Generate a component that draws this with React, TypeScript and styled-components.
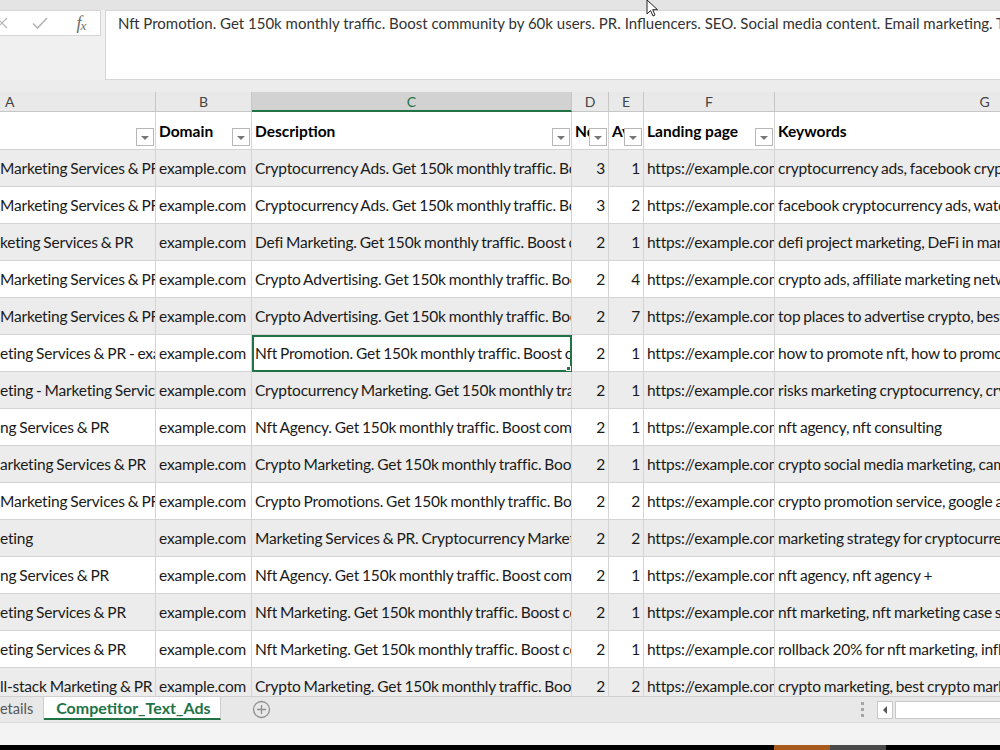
import React from 'react';
import styled, { createGlobalStyle } from 'styled-components';

const GlobalStyle = createGlobalStyle`
  html, body {
    margin: 0;
    padding: 0;
    overflow: hidden;
    background: #f3f3f3;
  }
  * {
    box-sizing: border-box;
  }
`;

const COLS = '156px 96px 320px 37px 35px 131px 420px';
const GRID = '#d4d4d4';
const GREEN = '#217346';
const FONT = `Lato, "Open Sans", sans-serif`;

const Frame = styled.div`
  width: 1000px;
  height: 750px;
  display: flex;
  flex-direction: column;
  overflow: hidden;
  position: relative;
  font-family: ${FONT};
  background: #f0f0f0;
`;

const TopStrip = styled.div`
  height: 10px;
  background: #e4e4e4;
  flex-shrink: 0;
`;

const FormulaRow = styled.div`
  height: 70px;
  display: flex;
  gap: 4px;
  flex-shrink: 0;
`;

const EditButtons = styled.div`
  width: 101px;
  height: 26px;
  background: #fff;
  border: 1px solid #d6d6d6;
  border-left: none;
  display: flex;
  align-items: center;
  gap: 22px;
`;

const IconSlot = styled.span<{ $w?: number }>`
  width: ${p => p.$w || 16}px;
  height: 20px;
  display: flex;
  align-items: center;
  justify-content: center;
`;

const Fx = styled.span`
  font-family: "Liberation Serif", serif;
  font-style: italic;
  font-size: 18px;
  color: #6d6d6d;
  letter-spacing: -1px;

  sub {
    font-size: 13px;
    vertical-align: -1px;
  }
`;

const FormulaInput = styled.div`
  flex: 1;
  background: #fff;
  border: 1px solid #d6d6d6;
  border-right: none;
  padding: 0 0 0 12px;
  font-size: 15px;
  color: #333;
  white-space: nowrap;
  overflow: hidden;
  line-height: 25px;
`;

const Gap = styled.div`
  height: 12px;
  background: #ececec;
  flex-shrink: 0;
`;

const Sheet = styled.div`
  height: 604px;
  overflow: hidden;
  background: #fff;
  flex-shrink: 0;
`;

const Row = styled.div<{ $h: number; $bg?: string }>`
  display: grid;
  grid-template-columns: ${COLS};
  height: ${p => p.$h}px;
  background: ${p => p.$bg || '#fff'};
`;

const ColHead = styled.div<{ $active?: boolean; $left?: boolean }>`
  display: flex;
  align-items: center;
  justify-content: ${p => (p.$left ? 'flex-start' : 'center')};
  padding-left: ${p => (p.$left ? '5px' : '0')};
  background: ${p => (p.$active ? '#d2d2d2' : '#e9e9e9')};
  color: ${p => (p.$active ? GREEN : '#444')};
  border-right: 1px solid #c6c6c6;
  border-bottom: ${p => (p.$active ? `2px solid ${GREEN}` : '1px solid #c6c6c6')};
  font-size: 14px;
`;

const HeadCell = styled.div`
  position: relative;
  display: flex;
  align-items: center;
  padding: 0 3px;
  border-right: 1px solid ${GRID};
  border-bottom: 1px solid ${GRID};
  font-weight: 700;
  font-size: 15.5px;
  color: #000;
  white-space: nowrap;
  overflow: hidden;
`;

const FilterBtn = styled.span`
  position: absolute;
  right: 1px;
  bottom: 3px;
  width: 18px;
  height: 18px;
  background: #fff;
  border: 1px solid #b7b7b7;
  display: flex;
  align-items: center;
  justify-content: center;

  &::after {
    content: '';
    width: 0;
    height: 0;
    border-left: 4px solid transparent;
    border-right: 4px solid transparent;
    border-top: 4px solid #777;
    margin-top: 2px;
  }
`;

const Cell = styled.div<{ $num?: boolean; $first?: boolean; $selected?: boolean }>`
  position: relative;
  display: flex;
  align-items: center;
  justify-content: ${p => (p.$num ? 'flex-end' : 'flex-start')};
  padding: ${p => (p.$num ? '0 3px 0 0' : p.$first ? '0' : '0 3px')};
  border-right: 1px solid ${GRID};
  border-bottom: 1px solid ${GRID};
  font-size: 15.5px;
  letter-spacing: -0.2px;
  word-spacing: -0.8px;
  color: #1a1a1a;
  white-space: nowrap;
  overflow: hidden;
  outline: ${p => (p.$selected ? `2px solid ${GREEN}` : 'none')};
  outline-offset: -2px;
`;

const FillHandle = styled.span`
  position: absolute;
  right: 0;
  bottom: 0;
  width: 5px;
  height: 5px;
  background: ${GREEN};
  border: 1px solid #fff;
`;

const TabBar = styled.div`
  height: 26px;
  flex-shrink: 0;
  display: flex;
  align-items: stretch;
  background: #e8e8e8;
  border-top: 1px solid #d0d0d0;
`;

const Tab = styled.div<{ $active?: boolean }>`
  display: flex;
  align-items: center;
  padding: ${p => (p.$active ? '0 9px 0 12px' : '0 10px 0 0')};
  font-size: ${p => (p.$active ? '16px' : '14.5px')};
  font-weight: ${p => (p.$active ? 700 : 400)};
  color: ${p => (p.$active ? GREEN : '#555')};
  background: ${p => (p.$active ? '#fff' : 'transparent')};
  border-bottom: ${p => (p.$active ? `2px solid ${GREEN}` : 'none')};
  border-right: 1px solid #cfcfcf;
  margin-bottom: 2px;
`;

const AddSheet = styled.div`
  margin-left: 31px;
  display: flex;
  align-items: center;
`;

const TabSpacer = styled.div`
  flex: 1;
`;

const Splitter = styled.div`
  width: 3px;
  display: flex;
  flex-direction: column;
  justify-content: center;
  gap: 3px;
  margin-right: 13px;

  span {
    width: 3px;
    height: 3px;
    background: #a5a5a5;
  }
`;

const ScrollArea = styled.div`
  display: flex;
  align-items: center;
  gap: 2px;
  padding: 3px 0;
`;

const ScrollArrow = styled.div`
  width: 16px;
  height: 18px;
  background: #fff;
  border: 1px solid #c8c8c8;
  display: flex;
  align-items: center;
  justify-content: center;

  &::after {
    content: '';
    border-top: 4px solid transparent;
    border-bottom: 4px solid transparent;
    border-right: 4px solid #555;
  }
`;

const ScrollTrack = styled.div`
  width: 105px;
  height: 18px;
  background: #fff;
  border: 1px solid #c8c8c8;
  border-right: none;
`;

const StatusArea = styled.div`
  height: 23px;
  flex-shrink: 0;
  background: #f3f3f3;
  border-top: 1px solid #dadada;
`;

const Taskbar = styled.div`
  height: 5px;
  flex-shrink: 0;
  background: #000;
  display: flex;
  padding-left: 774px;
`;

const TaskItem = styled.div<{ $color: string }>`
  width: 56px;
  background: ${p => p.$color};
`;

const Cursor = styled.svg`
  position: absolute;
  left: 646px;
  top: -1px;
`;

type DataRow = [string, string, string, string, string, string, string];

const rows: DataRow[] = [
  ['Marketing Services & PR', 'example.com', 'Cryptocurrency Ads. Get 150k monthly traffic. Boost community by 60k users.', '3', '1', 'https://example.com/crypto-ads', 'cryptocurrency ads, facebook crypto ads'],
  ['Marketing Services & PR', 'example.com', 'Cryptocurrency Ads. Get 150k monthly traffic. Boost community by 60k users.', '3', '2', 'https://example.com/crypto-ads', 'facebook cryptocurrency ads, watch crypto ads'],
  ['keting Services & PR', 'example.com', 'Defi Marketing. Get 150k monthly traffic. Boost community by 60k users.', '2', '1', 'https://example.com/defi', 'defi project marketing, DeFi in marketing'],
  ['Marketing Services & PR', 'example.com', 'Crypto Advertising. Get 150k monthly traffic. Boost community by 60k users.', '2', '4', 'https://example.com/ads', 'crypto ads, affiliate marketing network'],
  ['Marketing Services & PR', 'example.com', 'Crypto Advertising. Get 150k monthly traffic. Boost community by 60k users.', '2', '7', 'https://example.com/ads', 'top places to advertise crypto, best'],
  ['eting Services & PR - example', 'example.com', 'Nft Promotion. Get 150k monthly traffic. Boost community by 60k users.', '2', '1', 'https://example.com/nft', 'how to promote nft, how to promote'],
  ['eting - Marketing Services', 'example.com', 'Cryptocurrency Marketing. Get 150k monthly traffic. Boost community.', '2', '1', 'https://example.com/marketing', 'risks marketing cryptocurrency, crypto'],
  ['ng Services & PR', 'example.com', 'Nft Agency. Get 150k monthly traffic. Boost community by 60k users.', '2', '1', 'https://example.com/nft-agency', 'nft agency, nft consulting'],
  ['arketing Services & PR', 'example.com', 'Crypto Marketing. Get 150k monthly traffic. Boost community by 60k users.', '2', '1', 'https://example.com/marketing', 'crypto social media marketing, campaigns'],
  ['Marketing Services & PR', 'example.com', 'Crypto Promotions. Get 150k monthly traffic. Boost community by 60k users.', '2', '2', 'https://example.com/promotion', 'crypto promotion service, google ads'],
  ['eting', 'example.com', 'Marketing Services & PR. Cryptocurrency Marketing Agency.', '2', '2', 'https://example.com/strategy', 'marketing strategy for cryptocurrency'],
  ['ng Services & PR', 'example.com', 'Nft Agency. Get 150k monthly traffic. Boost community by 60k users.', '2', '1', 'https://example.com/nft-agency', 'nft agency, nft agency +'],
  ['eting Services & PR', 'example.com', 'Nft Marketing. Get 150k monthly traffic. Boost community by 60k users.', '2', '1', 'https://example.com/nft-marketing', 'nft marketing, nft marketing case study'],
  ['eting Services & PR', 'example.com', 'Nft Marketing. Get 150k monthly traffic. Boost community by 60k users.', '2', '1', 'https://example.com/nft-marketing', 'rollback 20% for nft marketing, influencers'],
  ['ll-stack Marketing & PR', 'example.com', 'Crypto Marketing. Get 150k monthly traffic. Boost community by 60k users.', '2', '2', 'https://example.com/marketing', 'crypto marketing, best crypto marketing'],
];

const headers = ['', 'Domain', 'Description', 'No', 'Av', 'Landing page', 'Keywords'];
const letters = ['A', 'B', 'C', 'D', 'E', 'F', 'G'];

const SELECTED_ROW = 5;

const App: React.FC = () => {
  return (
    <Frame>
      <GlobalStyle />
      <TopStrip />
      <FormulaRow>
        <EditButtons>
          <IconSlot $w={10}>
            <svg width="10" height="14" viewBox="0 0 10 14">
              <path d="M-3 2 L7 12 M7 2 L-3 12" stroke="#b5b5b5" strokeWidth="1.2" fill="none" />
            </svg>
          </IconSlot>
          <IconSlot>
            <svg width="16" height="14" viewBox="0 0 16 14">
              <path d="M1 7.5 L5.5 12 L15 2" stroke="#b5b5b5" strokeWidth="1.6" fill="none" />
            </svg>
          </IconSlot>
          <IconSlot $w={22}>
            <Fx>f<sub>x</sub></Fx>
          </IconSlot>
        </EditButtons>
        <FormulaInput>
          Nft Promotion. Get 150k monthly traffic. Boost community by 60k users. PR. Influencers. SEO. Social media content. Email marketing. Telegram.
        </FormulaInput>
      </FormulaRow>
      <Gap />
      <Sheet>
        <Row $h={20}>
          {letters.map((l, i) => (
            <ColHead key={l} $active={i === 2} $left={i === 0}>
              {l}
            </ColHead>
          ))}
        </Row>
        <Row $h={38}>
          {headers.map((h, i) => (
            <HeadCell key={i}>
              {h}
              {i < 6 && <FilterBtn />}
            </HeadCell>
          ))}
        </Row>
        {rows.map((r, ri) => (
          <Row key={ri} $h={37} $bg={ri % 2 === 0 ? '#ececec' : '#fff'}>
            {r.map((v, ci) => (
              <Cell
                key={ci}
                $num={ci === 3 || ci === 4}
                $first={ci === 0}
                $selected={ri === SELECTED_ROW && ci === 2}
              >
                {v}
                {ri === SELECTED_ROW && ci === 2 && <FillHandle />}
              </Cell>
            ))}
          </Row>
        ))}
      </Sheet>
      <TabBar>
        <Tab>etails</Tab>
        <Tab $active>Competitor_Text_Ads</Tab>
        <AddSheet>
          <svg width="19" height="19" viewBox="0 0 19 19">
            <circle cx="9.5" cy="9.5" r="8" stroke="#8f8f8f" strokeWidth="1.3" fill="none" />
            <path d="M9.5 5 V14 M5 9.5 H14" stroke="#8f8f8f" strokeWidth="1.3" />
          </svg>
        </AddSheet>
        <TabSpacer />
        <Splitter>
          <span />
          <span />
          <span />
        </Splitter>
        <ScrollArea>
          <ScrollArrow />
          <ScrollTrack />
        </ScrollArea>
      </TabBar>
      <StatusArea />
      <Taskbar>
        <TaskItem $color="#a85a1c" />
        <TaskItem $color="#4a4a4a" />
      </Taskbar>
      <Cursor width="14" height="20" viewBox="0 0 14 20">
        <path d="M1 1 L1 15 L4.5 11.5 L7 17 L9 16 L6.7 10.7 L11.5 10.7 Z" fill="#fff" stroke="#222" strokeWidth="1" />
      </Cursor>
    </Frame>
  );
};

export default App;
